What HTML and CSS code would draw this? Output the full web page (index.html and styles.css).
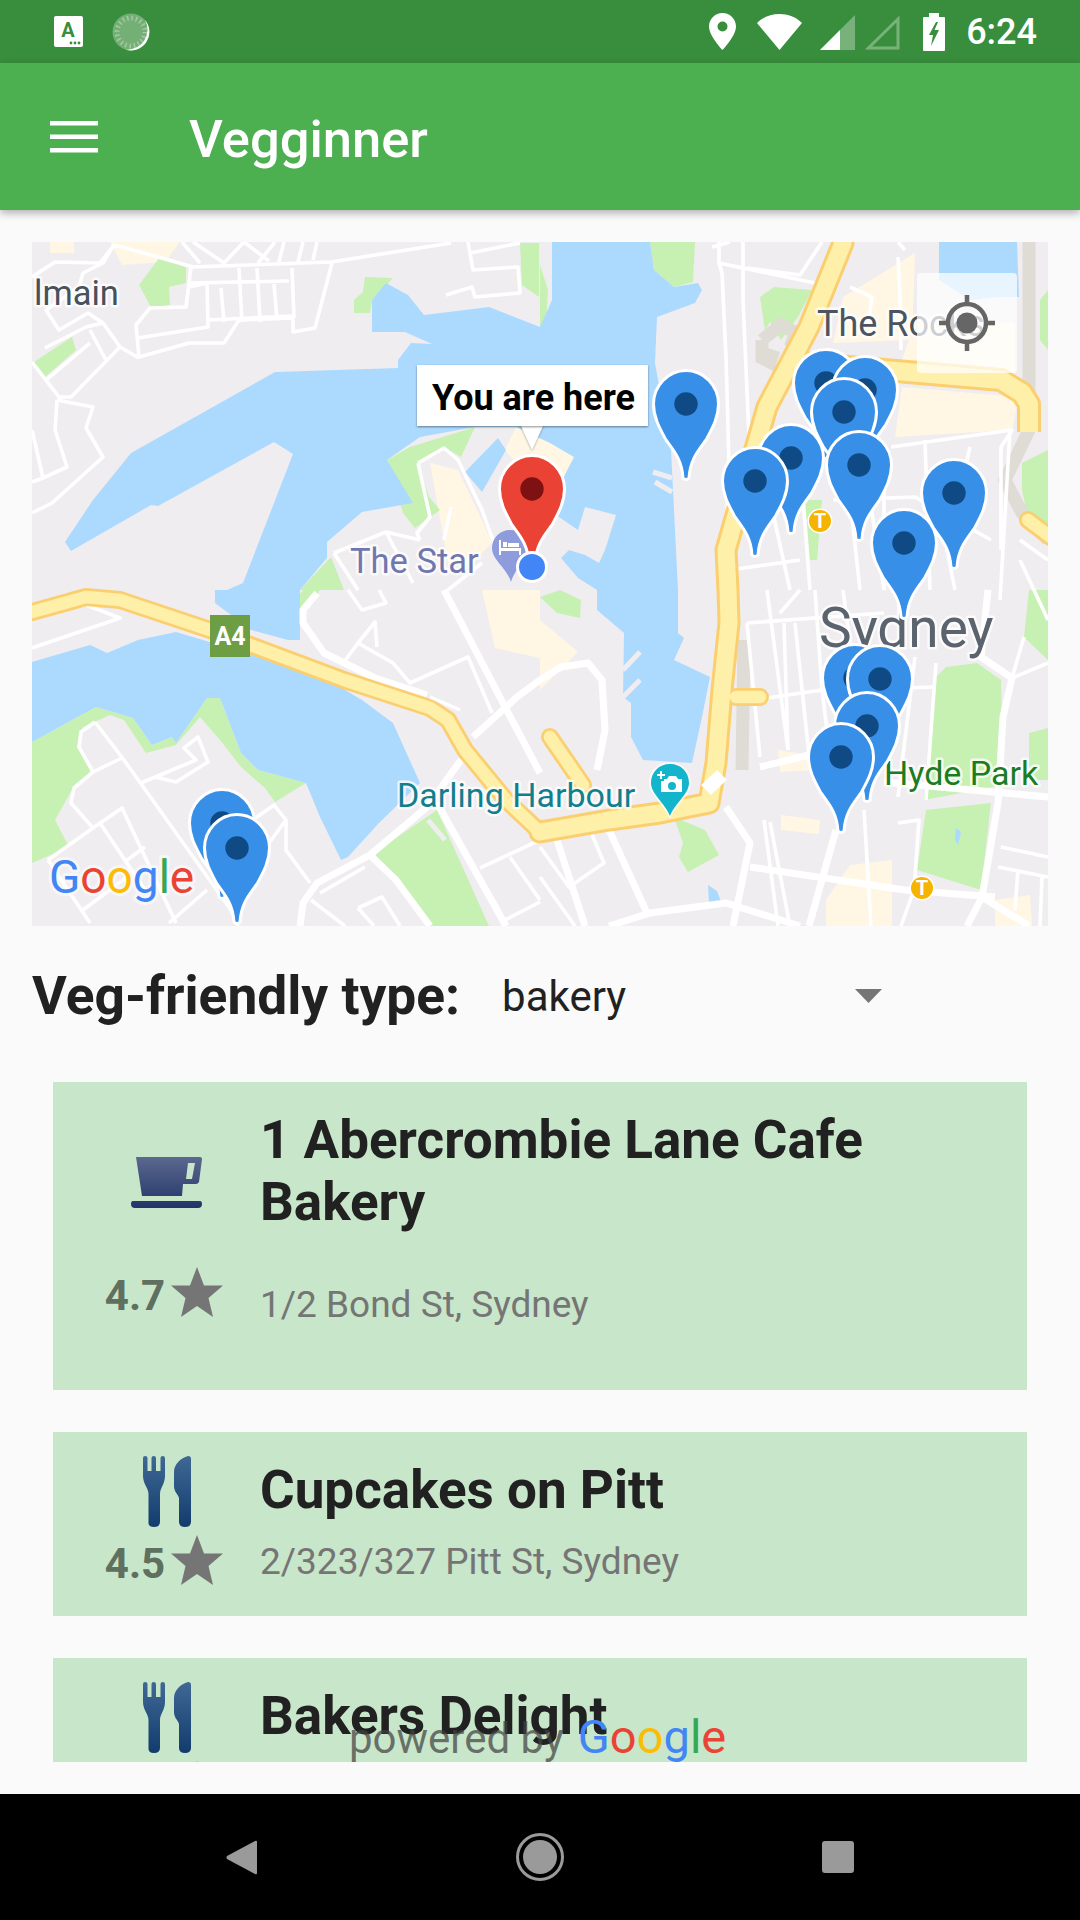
FILE: index.html
```html
<!DOCTYPE html>
<html lang="en">
<head>
<meta charset="utf-8">
<title>Vegginner</title>
<link rel="stylesheet" href="styles.css">
</head>
<body>
<div class="screen">
  <header class="statusbar">
    <div class="status-left">
      <svg class="ic-a" width="29" height="31" viewBox="0 0 29 31"><rect width="29" height="31" rx="2" fill="#fff"/><text class="ic-a-letter" x="14" y="21" text-anchor="middle">A</text><circle cx="17" cy="27" r="1.4" fill="#388e3c"/><circle cx="21" cy="27" r="1.4" fill="#388e3c"/><circle cx="25" cy="27" r="1.4" fill="#388e3c"/></svg>
      <svg class="ic-spin" width="38" height="38" viewBox="-19 -19 38 38"><circle r="18.5" fill="#fff" opacity=".3"/><circle r="14" fill="none" stroke="#fff" stroke-width="5" stroke-dasharray="1.4 3" opacity=".35"/><path d="M14 -12 A18.5 18.5 0 0 1 -6 17.5 A20 20 0 0 0 14 -12Z" fill="#fff"/></svg>
    </div>
    <div class="status-right">
      <svg width="27" height="37" viewBox="0 0 27 37"><path fill-rule="evenodd" d="M13.500 0C6 0 0 6 0 13.500C0 23 13.500 37 13.500 37S27 23 27 13.500C27 6 21 0 13.500 0ZM13.500 18.500a5 5 0 1 1 0-10a5 5 0 0 1 0 10Z" fill="#fff"/></svg>
      <svg class="ic-wifi" width="45" height="36" viewBox="0 0 45 36"><path d="M22.500 36L0 9C6 3 14 0 22.500 0S39 3 45 9Z" fill="#fff"/></svg>
      <svg class="ic-sig" width="35" height="35" viewBox="0 0 35 35"><path d="M35 0V35H0Z" fill="#fff" opacity=".32"/><path d="M20 15V35H0Z" fill="#fff"/></svg>
      <svg class="ic-sig2" width="35" height="35" viewBox="0 0 35 35"><path d="M33 4V33H3.500Z" fill="none" stroke="#fff" stroke-width="3" opacity=".32"/></svg>
      <svg class="ic-bat" width="22" height="38" viewBox="0 0 22 38"><path fill-rule="evenodd" d="M6 0H16V4H21Q22 4 22 5V37Q22 38 21 38H1Q0 38 0 37V5Q0 4 1 4H6ZM13 9L6 22H10L8 33L16 17H11.500L15 9Z" fill="#fff"/></svg>
      <span class="clock">6:24</span>
    </div>
  </header>

  <div class="appbar">
    <svg class="menu" width="48" height="32" viewBox="0 0 48 32"><rect width="48" height="4.500" fill="#fff"/><rect y="13.500" width="48" height="4.500" fill="#fff"/><rect y="27" width="48" height="4.500" fill="#fff"/></svg>
    <h1 class="title">Vegginner</h1>
  </div>

  <main class="content">
    <div class="map">
      <svg class="map-svg" width="1016" height="684" viewBox="32 242 1016 684">
        <defs>
          <path id="pinbody" d="M0 -33.500C18 -33.500 32.500 -18 32.500 0C32.500 13 27 23 20 36C12 47 4 56 3 74Q0 77 -3 74C-4 56 -12 47 -20 36C-27 23 -32.500 13 -32.500 0C-32.500 -18 -18 -33.500 0 -33.500Z"/>
          <g id="bluepin"><use href="#pinbody" class="pin-body"/><circle r="11.700" class="pin-dot"/></g>
          <path id="hw1" d="M32 612L86 597L120 600L210 630L344 680L430 708L448 720L465 750L506 800L540 832"/>
          <path id="hw2" d="M540 832L609 820L660 813L709 803L716 763L722 690L729 623L728 590L726 550L767 407L809 327L843 243"/>
          <path id="hw3" d="M798 363L826 365L1001 380L1022 393L1029 404V432"/>
          <path id="hw4" d="M550 737L583 785M736 697H760M1028 520L1052 538"/>
        </defs>
        <rect x="32" y="242" width="1016" height="684" class="land"/>

        <g class="pale">
          <path d="M50 242H74V253H50Z"/>
          <path d="M110 242H180L165 262L122 265Z"/>
          <path d="M843 297L915 253L912 340L833 343Z"/>
          <path d="M915 323L1015 323L1015 375L900 365Z"/>
          <path d="M902 387L1019 397L1012 430L895 437Z"/>
          <path d="M430 463L458 470L482 520L492 543L470 565L448 563Z"/>
          <path d="M516 427L550 443L574 457L552 500L540 490L505 450Z"/>
          <path d="M540 620L578 652L540 690Z"/>
          <path d="M778 750L815 756L816 770L780 772Z"/>
          <path d="M781 815L820 820L819 834L781 830Z"/>
          <path d="M826 900L850 865L892 860L892 926H826Z"/>
          <path d="M995 900L1030 895L1032 926H995Z"/>
          <path d="M482 590H540V658L495 648Z"/>
        </g>

        <g class="park">
          <path d="M160 257L186 267V283L169 287L170 305L151 307L139 285Z"/>
          <path d="M365 277L393 278L372 300L370 313H354V300L363 292Z"/>
          <path d="M34 362L72 337L76 350L45 377Z"/>
          <path d="M520 243H539L539 297L522 285Z"/>
          <path d="M540 265L548 290L546 323L540 327Z"/>
          <path d="M387 460L410 447L475 427L461 457L444 447L418 463L429 497L440 510L415 528L403 513Z"/>
          <path d="M331 557L344 590H300Z"/>
          <path d="M650 242H695L693 282L674 287L654 270Z"/>
          <path d="M760 297L774 287L812 290L798 317L781 340L770 322L765 330Z"/>
          <path d="M1022 463L1048 450V523H1029L1022 490Z"/>
          <path d="M1029 590H1048V660L1024 637Z"/>
          <path d="M1029 733L1048 728V780H1029Z"/>
          <path d="M936 677L946 667L977 663L1001 680L1003 785L924 800Z"/>
          <path d="M926 810L991 803L981 890L917 870Z"/>
          <path d="M674 817L705 830L719 855L688 872L679 857L683 843Z"/>
          <path d="M540 597L560 590L581 600L580 618L557 613Z"/>
          <path d="M805 500H822L817 560H810Z"/>
          <path d="M32 742L96 707L133 718L152 745L172 737L176 743L207 698L220 698L241 753L258 770L306 783L275 802L265 788L241 767L220 740L200 717L176 745L146 753L124 720L110 715L83 727L77 747L93 772L72 790L55 820L69 847L32 863Z"/>
          <path d="M374 853L437 810L489 926H430L396 880Z"/>
          <path d="M290 607L303 590L320 590L304 615Z"/>
          <path d="M1040 300L1048 290V350L1040 340Z"/>
        </g>

        <g class="water">
          <path d="M552 242L650 242L654 270L674 287L698 283L702 290L695 303L657 317L655 363L671 450L672 470L678 590L678 633L684 638L674 660L710 677L702 717L692 763L643 760L631 737L631 703L623 697L624 633L597 610L597 590L578 578L561 558L569 550L585 555L599 563L605 550L616 515L585 507L578 530L556 515L552 500L574 457L550 443L516 427L475 427L420 437L387 460L413 503L362 512L327 542L327 558L300 590L300 640L288 640L251 630L215 603L215 590L227 590L243 583L293 454L274 442L158 506L151 505L71 551L65 542L93 500L131 453L275 372L398 368L398 360L411 343L432 344L405 332L372 332L372 300L386 283L408 295L424 315L489 307L540 327L552 300Z"/>
          <path d="M32 662L90 645L107 653L138 640L176 632L270 660L317 673L362 700L393 723L420 783L379 823L348 857L341 860L320 817L306 783L258 770L241 753L220 698L207 698L176 743L172 737L152 745L133 718L96 707L32 742Z"/>
          <path d="M708 885L717 891L722 904H709Z"/>
          <path d="M956 828L961 832L958 845L955 840Z"/>
          <path d="M939 242H1017L1019 297L1001 297L970 300L939 280Z"/>
          <path d="M465 472L498 438L506 450L482 492Z"/>
        </g>

        <g class="piers">
          <path d="M653 472L672 478"/>
          <path d="M655 482L672 492"/>
          <path d="M623 670L640 652"/>
          <path d="M623 697L640 680"/>
          <path d="M428 820L445 840"/>
        </g>

        <g class="grayroad">
          <path d="M1029 242V430L1005 480L1022 513L1048 540"/>
          <path d="M744 640L742 770"/>
          <path d="M762 340L781 325L796 333L790 347M774 350L770 362L762 358L762 340"/>
        </g>

        <g class="r">
          <path d="M32 277L55 262L100 263L114 245L158 257L193 267L331 262L451 243"/>
          <path d="M191 267L186 307L150 308L136 325L139 357L189 343H224L239 320L293 318V332L315 328L332 263"/>
          <path d="M138 338L208 327L207 283L189 287"/>
          <path d="M208 320L293 316M191 283L289 281"/>
          <path d="M221 288L224 322M239 268L242 322M257 268L260 322M274 284L277 320M292 268L294 318"/>
          <path d="M182 242L200 263M224 263L244 242M193 242L224 263M258 263L275 242M244 242L269 261M279 262L284 242M298 262L303 242M313 260L317 242"/>
          <path d="M114 245L103 263L83 273L79 287L46 310L59 330L88 313L103 323L120 347L139 358"/>
          <path d="M45 348L86 327L103 323M90 330L107 362M119 348L71 397H59L32 362M46 380L90 343M57 400L55 430L67 467L43 478L32 430M57 400L93 407L86 428L103 457L52 503L32 513M32 482L43 478"/>
          <path d="M468 242L473 270L518 267L520 293L475 297L472 287L446 295M470 253L520 243"/>
          <path d="M418 463L444 448L458 460L482 510L500 560M418 463L430 517L417 533L420 540M451 507L444 540M334 553L386 532L420 540M334 553L358 590M386 532L413 583M482 563L448 590"/>
          <path d="M32 648L120 618L86 605L32 615M348 590L362 610L386 603L379 590"/>
          <path d="M344 662L358 643L393 663L410 683L468 657L492 713M358 643L375 622L377 647"/>
          <path d="M95 722L124 760L231 910L238 926M95 722L81 732L79 747L93 772L74 788L71 803L93 828L48 860M93 772L122 758"/>
          <path d="M141 783L196 760L184 748L198 737L208 762L176 782L155 777"/>
          <path d="M93 828L122 808L176 923M100 823L145 890M127 860L145 847M48 860L90 923M83 910L127 877M203 863L257 817L274 805L286 820V850L310 883M286 820L269 843M169 923L207 890"/>
          <path d="M480 868L540 840M510 857L540 900M505 920L540 902M320 893L365 867M311 900L345 926M358 908L374 926M358 908L382 897L400 926"/>
          <path d="M540 847L569 887L604 863L590 830M540 877L575 926"/>
          <path d="M770 822L790 926M864 810L871 926M764 820L778 926"/>
          <path d="M719 242V263L722 273L726 357L729 463L724 590M743 242V300L750 460M719 263L815 283M747 268L800 275L822 242M898 257L900 297L901 350M850 287L872 297L868 326M898 242L905 250M712 247L730 242"/>
          <path d="M891 447L1012 430L1001 447V550M884 450V590M833 500L915 497L991 540M970 447L960 490M800 460L810 590M770 500L790 590M850 500L860 590M730 570L800 560M925 440L930 590M945 540L955 590M890 540L940 535"/>
          <path d="M747 623L760 757M767 590L788 750M784 623L788 750M795 623L809 755M815 590L822 690M843 590L850 643M747 623L884 613M753 700L822 690L936 687M822 690L830 755M850 643L858 690"/>
          <path d="M915 657L898 797M936 663L926 800M898 823L919 820L914 890L901 926M1001 847L1048 857M998 867L1048 877M1018 870L1015 910M1042 877L1040 926"/>
          <path d="M780 613L800 590M870 500L884 590M1012 678L1048 663M1012 678L1024 637M1020 560L1048 620"/>
          <path d="M1010 430L1000 600M1020 540L1048 560"/>
        </g>

        <g class="rt">
          <path d="M300 926L303 903L317 883L370 855L427 807L461 760"/>
          <path d="M370 855L396 880L430 926"/>
          <path d="M437 803L506 926"/>
          <path d="M444 590L503 703L540 773"/>
          <path d="M473 737L517 697L540 680L561 667L588 663L602 680L605 730L597 770"/>
          <path d="M557 840L585 926M609 830L647 913"/>
          <path d="M609 926L650 913L726 903L800 926"/>
          <path d="M726 807L750 843L733 926"/>
          <path d="M836 830L809 926"/>
          <path d="M760 767L809 755"/>
          <path d="M884 782L1048 797"/>
          <path d="M988 590L981 657L1012 678L1003 717L998 803L982 897L967 926"/>
          <path d="M982 897L1029 926"/>
          <path d="M750 867L905 890L995 897"/>
          <path d="M317 593L303 610V623L324 653L375 678L427 695"/>
        </g>

        <g class="hw-edge hw-a"><use href="#hw1"/><use href="#hw4"/></g>
        <g class="hw-edge hw-b"><use href="#hw2"/></g>
        <g class="hw-edge hw-c"><use href="#hw3"/></g>
        <g class="hw-fill hw-a"><use href="#hw1"/><use href="#hw4"/></g>
        <g class="hw-fill hw-b"><use href="#hw2"/></g>
        <g class="hw-fill hw-c"><use href="#hw3"/></g>
        <path class="rm" d="M430 697L460 710"/>
        <path class="rm-wide" d="M706 790L722 775"/>

        <text class="lbl lbl-dark" x="34" y="305">lmain</text>
        <text class="lbl lbl-rocks" x="817" y="336">The Rocks</text>
        <text class="lbl lbl-star" x="350" y="573">The Star</text>
        <text class="lbl lbl-sydney" x="819" y="647">Sydney</text>
        <text class="lbl lbl-darling" x="397" y="807">Darling Harbour</text>
        <text class="lbl lbl-hyde" x="884" y="785">Hyde Park</text>

        <rect class="shield" x="210" y="615" width="40" height="42"/>
        <text class="shield-text" x="230" y="645" text-anchor="middle">A4</text>

        <g transform="translate(820,521)"><circle r="12.500" class="tw"/><circle r="11" class="t"/><text class="t-text" y="7" text-anchor="middle">T</text></g>
        <g transform="translate(922,888)"><circle r="12.500" class="tw"/><circle r="11" class="t"/><text class="t-text" y="7" text-anchor="middle">T</text></g>

        <g transform="translate(670,783)">
          <path class="poi-halo" d="M0 -21C12 -21 21 -12 21 0C21 12 6 22 0 36C-6 22 -21 12 -21 0C-21 -12 -12 -21 0 -21Z"/>
          <path class="poi-cam" d="M0 -19C11 -19 19 -11 19 0C19 11 5 20 0 33C-5 20 -19 11 -19 0C-19 -11 -11 -19 0 -19Z"/>
          <path d="M-10 -12V-9H-13V-7H-10V-4H-8V-7H-5V-9H-8V-12ZM-6 -4H-3L-1 -7H6L8 -4H12V9H-9V-2H-6Z" fill="#fff"/>
          <circle cx="2" cy="3" r="4" class="poi-cam"/>
        </g>

        <g transform="translate(510,548)">
          <path class="poi-hotel" d="M0 -18C10 -18 18 -10 18 0C18 12 5 20 1 34C-3 20 -18 12 -18 0C-18 -10 -10 -18 0 -18Z"/>
          <path d="M-11 -8H-9V0H11V7H9V3H-9V7H-11ZM-7 -6H-3V-1H-7ZM-2 -5H9V-1H-2Z" fill="#fff"/>
        </g>

        <g class="pin">
          <use href="#bluepin" x="686" y="404"/>
          <use href="#bluepin" x="826" y="383"/>
          <use href="#bluepin" x="865" y="390"/>
          <use href="#bluepin" x="844" y="412"/>
          <use href="#bluepin" x="791" y="458"/>
          <use href="#bluepin" x="755" y="481"/>
          <use href="#bluepin" x="859" y="465"/>
          <use href="#bluepin" x="954" y="493"/>
          <use href="#bluepin" x="904" y="543"/>
          <use href="#bluepin" x="855" y="678"/>
          <use href="#bluepin" x="880" y="679"/>
          <use href="#bluepin" x="867" y="726"/>
          <use href="#bluepin" x="841" y="757"/>
          <use href="#bluepin" x="222" y="823"/>
          <use href="#bluepin" x="237" y="848"/>
        </g>

        <g transform="translate(532,489)" class="redpin"><use href="#pinbody"/><circle r="11.700" class="redpin-dot"/></g>
        <circle class="mylocation" cx="532" cy="567" r="14.500"/>

        <path class="bubble-tail" d="M520 424L532 450L544 424Z"/>
        <rect class="bubble" x="417" y="365" width="231" height="61"/>
        <text class="bubble-text" x="432" y="410">You are here</text>

        <text class="g-logo" x="49" y="893"><tspan class="g-b">G</tspan><tspan class="g-r">o</tspan><tspan class="g-y">o</tspan><tspan class="g-b">g</tspan><tspan class="g-g">l</tspan><tspan class="g-r">e</tspan></text>

        <rect class="locate" x="917" y="273" width="100" height="100" rx="4"/>
        <g class="locate-ic" transform="translate(967,323)">
          <circle r="19" class="locate-ring"/>
          <circle r="10.500" class="locate-core"/>
          <path d="M0 -28V-19M0 19V28M-28 0H-19M19 0H28" class="locate-ring"/>
        </g>
      </svg>
    </div>

    <div class="filter">
      <span class="filter-label">Veg-friendly type:</span>
      <span class="filter-value">bakery</span>
      <svg class="filter-arrow" width="27" height="14" viewBox="0 0 27 14"><path d="M0 0H27L13.500 14Z" fill="#757575"/></svg>
    </div>

    <div class="list">
      <article class="card card-tall">
        <div class="card-left">
          <svg class="icon-cup" width="71" height="51" viewBox="0 0 71 51"><defs><linearGradient id="cupg" x1="0" y1="0" x2="0" y2="1"><stop offset="0" stop-color="#5b688f"/><stop offset="1" stop-color="#223468"/></linearGradient></defs><path fill="url(#cupg)" fill-rule="evenodd" d="M5 0H69Q71 0 71 2L68 25Q67 27 65 27H52L51 39H11ZM57 6L55 22H61L64 6ZM2 44H69Q71 44 71 47Q71 51 67 51H4Q0 51 0 47Q0 44 2 44Z"/></svg>
          <div class="rating"><span class="rating-num">4.7</span><svg class="star" width="52" height="50" viewBox="0 0 52 50"><path d="M26 0L33 18.500L52 18.500L37.500 31L42 50L26 39L10 50L14.500 31L0 18.500L19 18.500Z" fill="#757575"/></svg></div>
        </div>
        <div class="card-right">
          <h2 class="card-title">1 Abercrombie Lane Cafe Bakery</h2>
          <p class="card-addr">1/2 Bond St, Sydney</p>
        </div>
      </article>

      <article class="card">
        <div class="card-left">
          <svg class="icon-fork" width="48" height="71" viewBox="0 0 48 71"><defs><linearGradient id="forkg" x1="0" y1="0" x2="0" y2="1"><stop offset="0" stop-color="#3f6895"/><stop offset="1" stop-color="#123c6c"/></linearGradient></defs><path fill="url(#forkg)" d="M0 2Q0 0 2.200 0T4.500 2V15H8.500V2Q8.500 0 10.700 0T13 2V15H17.500V2Q17.500 0 19.700 0T22 2V20C22 28 17 32 17 38V66Q17 71 11 71T5.500 66V38C5.500 32 0 28 0 20ZM48 3Q48 0 45 0C38 2 31 8 31 16V30C31 36 35 38 36 42V66Q36 71 42 71T48 66Z"/></svg>
          <div class="rating"><span class="rating-num">4.5</span><svg class="star" width="52" height="50" viewBox="0 0 52 50"><path d="M26 0L33 18.500L52 18.500L37.500 31L42 50L26 39L10 50L14.500 31L0 18.500L19 18.500Z" fill="#757575"/></svg></div>
        </div>
        <div class="card-right">
          <h2 class="card-title">Cupcakes on Pitt</h2>
          <p class="card-addr">2/323/327 Pitt St, Sydney</p>
        </div>
      </article>

      <article class="card">
        <div class="card-left">
          <svg class="icon-fork" width="48" height="71" viewBox="0 0 48 71"><path fill="url(#forkg)" d="M0 2Q0 0 2.200 0T4.500 2V15H8.500V2Q8.500 0 10.700 0T13 2V15H17.500V2Q17.500 0 19.700 0T22 2V20C22 28 17 32 17 38V66Q17 71 11 71T5.500 66V38C5.500 32 0 28 0 20ZM48 3Q48 0 45 0C38 2 31 8 31 16V30C31 36 35 38 36 42V66Q36 71 42 71T48 66Z"/></svg>
          <div class="rating"><span class="rating-num">4.4</span><svg class="star" width="52" height="50" viewBox="0 0 52 50"><path d="M26 0L33 18.500L52 18.500L37.500 31L42 50L26 39L10 50L14.500 31L0 18.500L19 18.500Z" fill="#757575"/></svg></div>
        </div>
        <div class="card-right">
          <h2 class="card-title">Bakers Delight</h2>
        </div>
      </article>

      <div class="powered"><span class="powered-text">powered by</span><span class="powered-logo"><span class="g-b">G</span><span class="g-r">o</span><span class="g-y">o</span><span class="g-b">g</span><span class="g-g">l</span><span class="g-r">e</span></span></div>
    </div>
  </main>

  <footer class="navbar">
    <svg width="31" height="35" viewBox="0 0 31 35"><path d="M31 2V33Q31 35 29 34L1 19Q0 17.500 1 16L29 1Q31 0 31 2Z" fill="#9a9a9a"/></svg>
    <svg width="48" height="48" viewBox="-24 -24 48 48"><circle r="22.500" fill="none" stroke="#9a9a9a" stroke-width="3"/><circle r="17" fill="#9a9a9a"/></svg>
    <svg width="32" height="32" viewBox="0 0 32 32"><rect width="32" height="32" rx="3" fill="#9a9a9a"/></svg>
  </footer>
</div>
</body>
</html>
```

FILE: styles.css
```css
* { box-sizing: border-box; }
html, body { margin: 0; padding: 0; }
body { font-family: Roboto, "Liberation Sans", sans-serif; background: #fafafa; }
.screen { width: 1080px; height: 1920px; display: flex; flex-direction: column; overflow: hidden; background: #fafafa; }

.statusbar { height: 63px; flex: none; background: #388e3c; display: flex; justify-content: space-between; align-items: center; padding: 0 43px 0 54px; }
.status-left { display: flex; align-items: center; gap: 29px; }
.status-right { display: flex; align-items: center; }
.ic-a-letter { font: 700 20px Roboto, sans-serif; fill: #388e3c; }
.ic-wifi { margin-left: 21px; }
.ic-sig { margin-left: 18px; margin-top: 2px; }
.ic-sig2 { margin-left: 10px; margin-top: 2px; }
.ic-bat { margin-left: 23px; }
.clock { margin-left: 21px; font-size: 36px; font-weight: 500; color: #fff; line-height: 1; }

.appbar { height: 147px; flex: none; background: #4caf50; display: flex; align-items: center; padding-left: 50px; box-shadow: 0 3px 8px rgba(0,0,0,.3); position: relative; z-index: 2; }
.menu { margin-top: 1px; }
.title { margin: 4px 0 0 91px; font-size: 52.500px; font-weight: 500; color: #fff; }

.content { flex: 1; min-height: 0; padding: 32px 32px 0; display: flex; flex-direction: column; }
.map { height: 684px; flex: none; overflow: hidden; }
.map-svg { display: block; }

.land { fill: #f0edf0; }
.pale path { fill: #fff6e4; }
.park path { fill: #c7f0b3; }
.water path { fill: #acdaff; }
.piers path { fill: none; stroke: #f0edf0; stroke-width: 5; }
.grayroad path { fill: none; stroke: #dedcd5; stroke-width: 13; }
.r path { fill: none; stroke: #fff; stroke-width: 3.6; stroke-linejoin: round; }
.rt path { fill: none; stroke: #fff; stroke-width: 7; stroke-linejoin: round; }
.hw-edge { fill: none; stroke: #fbcf70; stroke-linejoin: round; stroke-linecap: round; }
.hw-fill { fill: none; stroke: #fef0a8; stroke-linejoin: round; stroke-linecap: round; }
.hw-edge.hw-a { stroke-width: 18; }
.hw-fill.hw-a { stroke-width: 12.500; }
.hw-edge.hw-b { stroke-width: 23; }
.hw-fill.hw-b { stroke-width: 17; }
.hw-edge.hw-c { stroke-width: 24; stroke-linecap: butt; }
.hw-fill.hw-c { stroke-width: 18; stroke-linecap: butt; }
.rm { fill: none; stroke: #fff; stroke-width: 3; }
.rm-wide { fill: none; stroke: #fff; stroke-width: 14; }

.lbl { paint-order: stroke; stroke: rgba(255,255,255,.75); stroke-width: 5px; stroke-linejoin: round; font-family: Roboto, sans-serif; }
.lbl-dark { font-size: 34.500px; fill: #47505b; }
.lbl-rocks { font-size: 36px; fill: #4c545d; }
.lbl-star { font-size: 34.500px; fill: #6f77ae; }
.lbl-sydney { font-size: 55px; fill: #5a636e; }
.lbl-darling { font-size: 34px; fill: #127f8e; }
.lbl-hyde { font-size: 34px; fill: #1b7d20; }

.shield { fill: #6d9e44; }
.shield-text { font: 700 25px Roboto, sans-serif; fill: #fff; }
.tw { fill: #fff; }
.t { fill: #f5b400; }
.t-text { font: 700 20px Roboto, sans-serif; fill: #fff; }
.poi-halo { fill: #fff; opacity: .7; }
.poi-cam { fill: #12b5cb; }
.poi-hotel { fill: #8e9bdc; }

.pin-body { fill: #378fe8; stroke: #fff; stroke-width: 3; }
.pin-dot { fill: #0f4a85; }
.redpin { fill: #ea4335; stroke: #fff; stroke-width: 3; }
.redpin-dot { fill: #7e1111; stroke: none; }
.mylocation { fill: #4285f4; stroke: #fff; stroke-width: 3; }

.bubble { fill: #fff; filter: drop-shadow(0 1px 1px rgba(0,0,0,.45)); }
.bubble-tail { fill: #fff; filter: drop-shadow(0 1px 1px rgba(0,0,0,.3)); }
.bubble-text { font: 700 36px Roboto, sans-serif; fill: #000; }

.g-logo { font: 400 46px Roboto, sans-serif; paint-order: stroke; stroke: rgba(255,255,255,.5); stroke-width: 6px; stroke-linejoin: round; }
.g-b { fill: #4285f4; color: #4285f4; }
.g-r { fill: #ea4335; color: #ea4335; }
.g-y { fill: #fbbc05; color: #fbbc05; }
.g-g { fill: #34a853; color: #34a853; }

.locate { fill: rgba(255,255,255,.72); }
.locate-ring { fill: none; stroke: #666; stroke-width: 4.500; }
.locate-core { fill: #666; }

.filter { flex: none; height: 156px; display: flex; align-items: center; padding-bottom: 16px; }
.filter-label { font-size: 53.300px; font-weight: 700; color: #212121; }
.filter-value { margin-left: 42px; font-size: 42px; color: #212121; }
.filter-arrow { margin-left: 229px; margin-top: -1px; }

.list { position: relative; margin: 0 21px; height: 680px; overflow: hidden; display: flex; flex-direction: column; gap: 42px; }
.card { flex: none; height: 184px; background: #c8e6c9; display: flex; }
.card-tall { height: 308px; }
.card-left { flex: none; width: 207px; padding: 24px 0 0 20px; display: flex; flex-direction: column; align-items: center; }
.card-tall .card-left { padding-top: 75px; }
.icon-fork { display: block; flex: none; }
.icon-cup { display: block; flex: none; }
.rating { display: flex; align-items: flex-start; margin-top: 8px; margin-right: 5px; height: 50px; }
.card-tall .rating { margin-top: 59px; }
.rating-num { font-size: 42px; font-weight: 700; color: #5f6f60; line-height: 50px; margin-top: 4px; }
.star { display: block; margin-left: 6px; flex: none; }
.card-right { flex: 1; padding-top: 27px; padding-right: 60px; }
.card-title { margin: 0; font-size: 53px; font-weight: 700; line-height: 62px; color: #212121; }
.card-addr { margin: 19px 0 0; font-size: 37px; line-height: 44px; color: #757575; }
.card-tall .card-addr { margin-top: 50px; }

.powered { position: absolute; left: 296px; top: 627px; display: flex; align-items: baseline; white-space: nowrap; }
.powered-text { font-size: 42px; color: rgba(66,66,66,.72); }
.powered-logo { margin-left: 14px; font: 400 47px Roboto, sans-serif; }

.navbar { height: 126px; flex: none; background: #000; display: flex; align-items: center; padding: 0 226px; justify-content: space-between; }
```
